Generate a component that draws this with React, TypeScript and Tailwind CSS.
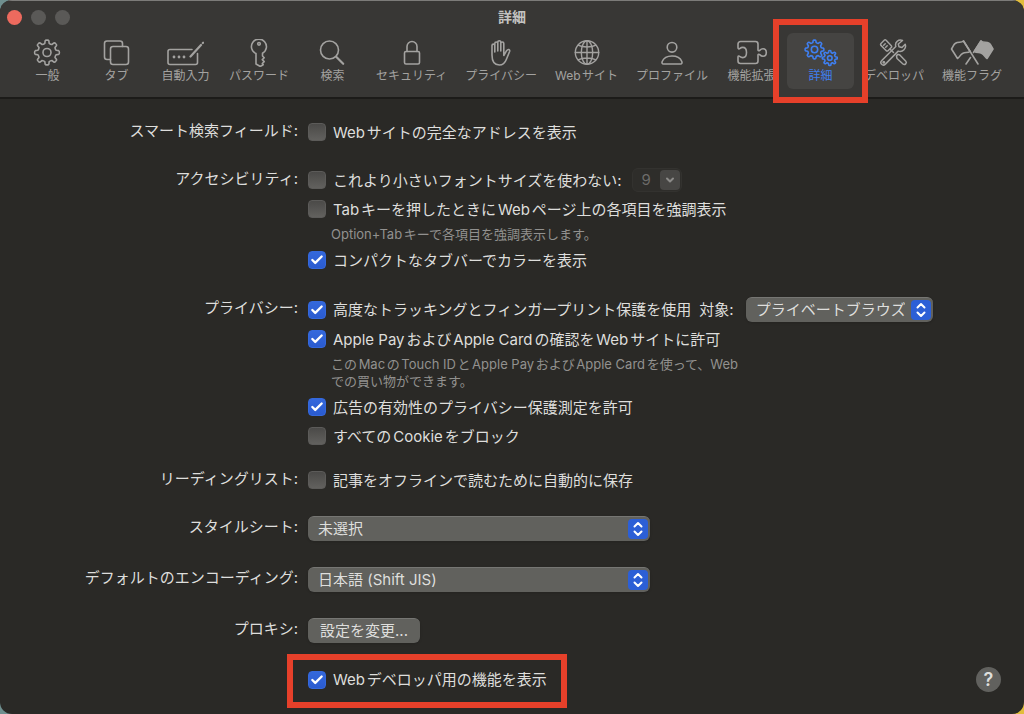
import type { ReactNode } from "react";
import { Check, ChevronDown } from "lucide-react";
import clsx from "clsx";

// Outline of a cog with rounded teeth
const gearPath = (cx: number, cy: number, outer: number, inner: number, teeth = 8) => {
  const step = (Math.PI * 2) / teeth;
  const at = (r: number, a: number) =>
    `${(cx + r * Math.cos(a)).toFixed(2)} ${(cy + r * Math.sin(a)).toFixed(2)}`;
  let d = "";
  for (let i = 0; i < teeth; i++) {
    const a = i * step - Math.PI / 2;
    d += `${i === 0 ? "M" : "L"}${at(inner, a - step * 0.3)}`;
    d += `L${at(outer - 0.6, a - step * 0.2)}`;
    d += `Q${at(outer + 0.2, a - step * 0.16)} ${at(outer, a)}`;
    d += `Q${at(outer + 0.2, a + step * 0.16)} ${at(outer - 0.6, a + step * 0.2)}`;
    d += `L${at(inner, a + step * 0.3)}`;
    d += `Q${at(inner - 0.6, a + step * 0.5)} ${at(inner, a + step * 0.7)}`;
  }
  return d + "Z";
};

const Icon = ({ width = 28, children }: { width?: number; children: ReactNode }) => (
  <svg
    width={width}
    height={28}
    viewBox={`0 0 ${width} 28`}
    fill="none"
    stroke="currentColor"
    strokeWidth={1.6}
    strokeLinecap="round"
    strokeLinejoin="round"
    aria-hidden="true"
  >
    {children}
  </svg>
);

const tabs: { label: string; icon: ReactNode }[] = [
  {
    label: "一般",
    icon: (
      <Icon>
        <path d={gearPath(14, 13.5, 12.4, 9.4)} />
        <circle cx="14" cy="13.5" r="4" />
      </Icon>
    ),
  },
  {
    label: "タブ",
    icon: (
      <Icon>
        <path d="M8.5 20.5H5A2.5 2.5 0 0 1 2.5 18V4.5A2.5 2.5 0 0 1 5 2h13a2.5 2.5 0 0 1 2.5 2.5v3" />
        <rect x="8.5" y="7.5" width="18" height="18" rx="2.5" />
      </Icon>
    ),
  },
  {
    label: "自動入力",
    icon: (
      <Icon width={38}>
        <path d="M26 10.5H4a2 2 0 0 0-2 2v11a2 2 0 0 0 2 2h25.500a2 2 0 0 0 2-2V14.500" />
        <path d="M24.500 17.500l10.500-11.500M36.800 4l.3-.3" strokeWidth="2.2" />
        <g fill="currentColor" stroke="none">
          <circle cx="8" cy="18" r="1.4" />
          <circle cx="13" cy="18" r="1.4" />
          <circle cx="18" cy="18" r="1.4" />
        </g>
      </Icon>
    ),
  },
  {
    label: "パスワード",
    icon: (
      <Icon>
        <path d="M11 14.500a7.500 7.500 0 1 1 6.500-.3v2.800l1.700 1.700-1.900 1.900 1.900 2-1.900 1.900.9 1.200-2.900 1.800-4.300-2.500z" />
        <circle cx="14" cy="4.800" r="1.300" />
      </Icon>
    ),
  },
  {
    label: "検索",
    icon: (
      <Icon>
        <circle cx="11.500" cy="11" r="9" />
        <path d="M18.200 17.800l7 7" strokeWidth="2.200" />
      </Icon>
    ),
  },
  {
    label: "セキュリティ",
    icon: (
      <Icon>
        <rect x="6.500" y="12.500" width="15" height="12.500" rx="1.500" />
        <path d="M9 12.500V7.500a5 5 0 0 1 10 0v5" />
      </Icon>
    ),
  },
  {
    label: "プライバシー",
    icon: (
      <Icon>
        <path d="M5 16V6.500a1.400 1.400 0 0 1 2.800 0V13M7.800 13V4.500a1.500 1.500 0 0 1 3 0V12M10.800 12V3.200a1.500 1.500 0 0 1 3 0V12M13.800 12V4.500a1.500 1.500 0 0 1 3 0V16.500l2.800-4.800c1.400-2 3.700-1.300 3 .8l-3.300 8c-1.400 3.800-3.500 5.500-7 5.500C7.500 26 5 22.500 5 16" />
      </Icon>
    ),
  },
  {
    label: "Webサイト",
    icon: (
      <Icon>
        <g strokeWidth="1.400">
          <circle cx="14" cy="13.500" r="11.700" />
          <ellipse cx="14" cy="13.500" rx="5.700" ry="11.700" />
          <path d="M14 1.800v23.400M2.300 13.500h23.400M5 6.200c5 2.400 13 2.400 18 0M5 20.800c5-2.400 13-2.400 18 0" />
        </g>
      </Icon>
    ),
  },
  {
    label: "プロファイル",
    icon: (
      <Icon>
        <circle cx="14" cy="8.300" r="4.800" />
        <path d="M5.500 25C4 25 3.700 23.800 4.200 22.500 5.500 19.300 9 17 14 17s8.500 2.300 9.800 5.500c.5 1.300.2 2.500-1.300 2.500z" />
      </Icon>
    ),
  },
  {
    label: "機能拡張",
    icon: (
      <Icon width={32}>
        <path d="M2 8.500V5a2.500 2.500 0 0 1 2.500-2.500h15A2.500 2.500 0 0 1 22 5v6c0 .8 1 1 1.700.4 1-1 2-1.600 3.300-1.600 2 0 3.300 1.500 3.300 3.700s-1.300 3.700-3.300 3.700c-1.300 0-2.300-.6-3.300-1.600-.7-.6-1.700-.4-1.700.4v6a2.500 2.500 0 0 1-2.500 2.500h-15A2.500 2.500 0 0 1 2 22v-4c0-1.200 1-1.300 1.700-.6 1 .8 1.900 1.200 3 1.200 2.200 0 3.800-2 3.800-5.100s-1.600-5.100-3.800-5.100c-1.100 0-2 .4-3 1.200-.7.5-1.700.2-1.700-1.100z" />
      </Icon>
    ),
  },
  {
    label: "詳細",
    icon: (
      <Icon width={34}>
        <path d={gearPath(10.500, 10.500, 9.400, 7.200)} />
        <circle cx="10.500" cy="10.500" r="3.200" />
        <path d={gearPath(25.800, 19, 7.500, 5.700)} />
        <circle cx="25.800" cy="19" r="2.300" />
      </Icon>
    ),
  },
  {
    label: "デベロッパ",
    icon: (
      <Icon width={32}>
        <g strokeWidth="1.500">
          <path d="M3 4.500l3.200-3.200c.6-.6 1.300-.6 1.900 0l5.200 5.500c.5.600.5 1.200 0 1.700L10 11.700c-.5.5-1.200.5-1.700 0L3 6.400c-.5-.6-.5-1.300 0-1.900z" />
          <path d="M7.200 4.800L5.700 6.300M9.200 6.800L7.700 8.300M12.200 10.200l3.300 3.300M18.500 17l1-1.500c1-.2 2 .1 2.800.9l5.500 5.800c1.600 1.800-1 4.400-2.800 2.800l-6-5.500z" />
          <path d="M24.500 1.500c-4-1.500-8 1.700-6.700 6l-14 14c-2.600 2.600.9 6.200 3.600 3.600l12.800-13c4.600 1.300 8.500-2.600 7-6.800L24 8.500l-3-.7-.7-2.800z" />
        </g>
        <circle cx="5.800" cy="23.200" r=".7" fill="currentColor" />
      </Icon>
    ),
  },
  {
    label: "機能フラグ",
    icon: (
      <Icon width={44}>
        <path d="M13.500 2L28 25M31 2L23.500 13.500M20.500 18.500L16 25" />
        <path d="M13.500 2c-2.500 2.200-5 .5-8 2.300C3.500 5.500 3 8 1.500 10l6 9.500c2-1 2.500-3.800 5.500-5.200 2.500-1.200 5-.2 7-2z" />
        <path
          d="M31 2c2.500 2.200 5 .5 8 2.300 2 1.200 2.500 3.700 4 5.700l-6 9.500c-2-1-2.500-3.800-5.500-5.200-2.500-1.200-5-.2-7-2z"
          fill="currentColor"
        />
      </Icon>
    ),
  },
];

const CheckRow = ({
  id,
  checked = false,
  children,
}: {
  id: string;
  checked?: boolean;
  children: ReactNode;
}) => (
  <div className="flex h-6 items-center gap-[7px]">
    <span className="grid h-[18px] w-[18px] place-items-center">
      <input
        id={id}
        type="checkbox"
        defaultChecked={checked}
        className="peer col-start-1 row-start-1 h-[18px] w-[18px] appearance-none rounded-sm border border-[#5c5b59] bg-linear-to-b from-[#4b4a48] to-[#62615e] checked:border-[#3468dc] checked:from-[#3468dc] checked:to-[#2a5bd0]"
      />
      <Check
        className="pointer-events-none invisible col-start-1 row-start-1 h-[14px] w-[14px] text-white peer-checked:visible"
        strokeWidth={4}
      />
    </span>
    <label htmlFor={id} className="pt-px whitespace-nowrap">
      {children}
    </label>
  </div>
);

const Popup = ({ id, value, className }: { id: string; value: string; className?: string }) => (
  <div className={clsx("grid h-[25px] items-center", className)}>
    <select
      id={id}
      className="col-start-1 row-start-1 h-[25px] w-full appearance-none rounded-md border-t border-[#767673] bg-[#61615d] pr-7 pl-[10px] leading-6 shadow-sm"
    >
      <option>{value}</option>
    </select>
    <span className="pointer-events-none col-start-1 row-start-1 mr-[2px] grid h-5 w-5 place-items-center justify-self-end rounded-sm bg-[#2c5fd6]">
      <svg
        width="12"
        height="16"
        viewBox="0 0 12 16"
        fill="none"
        stroke="white"
        strokeWidth="2"
        strokeLinecap="round"
        strokeLinejoin="round"
      >
        <path d="M2.500 5.500L6 2l3.500 3.500M2.500 10.500L6 14l3.500-3.500" />
      </svg>
    </span>
  </div>
);

const Section = ({
  label,
  htmlFor,
  className,
  children,
}: {
  label?: string;
  htmlFor?: string;
  className?: string;
  children: ReactNode;
}) => (
  <div className={clsx("grid grid-cols-[298px_1fr] gap-x-[10px]", className)}>
    {htmlFor ? (
      <label htmlFor={htmlFor} className="h-6 text-right leading-[22px]">
        {label}
      </label>
    ) : (
      <span className="h-6 text-right leading-[22px]">{label}</span>
    )}
    <div className="flex flex-col items-start gap-[5px]">{children}</div>
  </div>
);

const Note = ({ children }: { children: ReactNode }) => (
  <p className="pl-[23px] text-[13px] leading-[17px] text-[#92918f]">{children}</p>
);

const App = () => {
  return (
    <div className="min-h-screen bg-linear-to-r from-[#6f8f8f] to-[#e2bd3c]">
      <div className="flex min-h-screen flex-col overflow-hidden rounded-xl bg-[#2a2926] font-['Inter','Noto_Sans_CJK_JP',sans-serif] text-[15px] leading-6 text-[#dededc] [text-autospace:normal]">
        {/* Title bar and toolbar */}
        <header className="border-b-2 border-[#1c1b19] bg-[#383735]">
          <div className="grid h-[33px] grid-cols-[1fr_auto_1fr] items-center border-t border-[#7c7b79] px-[7px]">
            <div className="flex gap-[9px]">
              <button aria-label="閉じる" className="h-[15px] w-[15px] rounded-full bg-[#ed6a5e]" />
              <button aria-label="しまう" className="h-[15px] w-[15px] rounded-full bg-[#5a5957]" />
              <button aria-label="拡大" className="h-[15px] w-[15px] rounded-full bg-[#5a5957]" />
            </div>
            <h1 className="text-sm font-bold text-[#c4c3c1]">詳細</h1>
          </div>
          <nav className="flex h-16 items-start justify-center gap-[2px]">
            {tabs.map(({ label, icon }) => {
              const active = label === "詳細";
              return (
                <div key={label} className="relative">
                  <button
                    className={clsx(
                      "flex h-14 min-w-[67px] flex-col items-center rounded-md px-2 pt-[6px] text-xs leading-[18px] whitespace-nowrap",
                      active ? "bg-[#454442] text-[#3f7ff0]" : "text-[#a3a2a0]"
                    )}
                  >
                    {icon}
                    <span>{label}</span>
                  </button>
                  {active && (
                    <div className="pointer-events-none absolute -inset-x-[14px] -top-[14px] z-10 h-[84px] border-[6px] border-[#e6402a]" />
                  )}
                </div>
              );
            })}
          </nav>
        </header>

        {/* Settings */}
        <main className="flex-1 pt-[21px] pb-5">
          <Section label="スマート検索フィールド:">
            <CheckRow id="full-address">Webサイトの完全なアドレスを表示</CheckRow>
          </Section>

          <Section label="アクセシビリティ:" className="mt-6">
            <div className="flex items-center gap-[10px]">
              <CheckRow id="min-font">これより小さいフォントサイズを使わない:</CheckRow>
              <div className="grid h-6 w-[50px] items-center">
                <select
                  aria-label="フォントサイズ"
                  disabled
                  className="col-start-1 row-start-1 h-6 w-full appearance-none rounded-md border border-[#33322f] bg-[#2e2d2a] pl-[9px] leading-5 text-[#6c6b69] opacity-100"
                >
                  <option>9</option>
                </select>
                <span className="pointer-events-none col-start-1 row-start-1 mr-[2px] grid h-5 w-5 place-items-center justify-self-end rounded-sm bg-[#474644] text-[#8b8a88]">
                  <ChevronDown className="h-3 w-3" strokeWidth={4} />
                </span>
              </div>
            </div>
            <CheckRow id="tab-key">Tabキーを押したときにWebページ上の各項目を強調表示</CheckRow>
            <Note>Option+Tabキーで各項目を強調表示します。</Note>
            <CheckRow id="compact-color" checked>
              コンパクトなタブバーでカラーを表示
            </CheckRow>
          </Section>

          <Section label="プライバシー:" className="mt-[25px]">
            <div className="flex items-center">
              <CheckRow id="tracking" checked>
                高度なトラッキングとフィンガープリント保護を使用
              </CheckRow>
              <label htmlFor="tracking-target" className="pt-px pl-2">
                対象:
              </label>
              <Popup id="tracking-target" value="プライベートブラウズ" className="ml-3 w-[187px]" />
            </div>
            <CheckRow id="apple-pay" checked>
              Apple PayおよびApple Cardの確認をWebサイトに許可
            </CheckRow>
            <Note>
              このMacのTouch IDとApple PayおよびApple Cardを使って、Web
              <br />
              での買い物ができます。
            </Note>
            <CheckRow id="ad-measure" checked>
              広告の有効性のプライバシー保護測定を許可
            </CheckRow>
            <CheckRow id="block-cookie">すべてのCookieをブロック</CheckRow>
          </Section>

          <Section label="リーディングリスト:" className="mt-5">
            <CheckRow id="offline">記事をオフラインで読むために自動的に保存</CheckRow>
          </Section>

          <Section label="スタイルシート:" htmlFor="stylesheet" className="mt-6">
            <Popup id="stylesheet" value="未選択" className="w-[342px]" />
          </Section>

          <Section label="デフォルトのエンコーディング:" htmlFor="encoding" className="mt-[26px]">
            <Popup id="encoding" value="日本語 (Shift JIS)" className="w-[342px]" />
          </Section>

          <Section label="プロキシ:" className="mt-[26px]">
            <button className="h-[25px] rounded-md border-t border-[#767673] bg-[#61615d] px-3 leading-6 shadow-sm">
              設定を変更...
            </button>
          </Section>

          <Section className="mt-6">
            <div className="flex w-full items-center justify-between pr-[23px]">
              <div className="relative">
                <CheckRow id="developer" checked>
                  Webデベロッパ用の機能を表示
                </CheckRow>
                <div className="pointer-events-none absolute -top-[14px] -left-[21px] h-[54px] w-[280px] border-[6px] border-[#e6402a]" />
              </div>
              <button
                aria-label="ヘルプ"
                className="h-[25px] w-[25px] rounded-full bg-[#61615e] text-lg leading-6 font-semibold"
              >
                ?
              </button>
            </div>
          </Section>
        </main>
      </div>
    </div>
  );
};

export default App;
